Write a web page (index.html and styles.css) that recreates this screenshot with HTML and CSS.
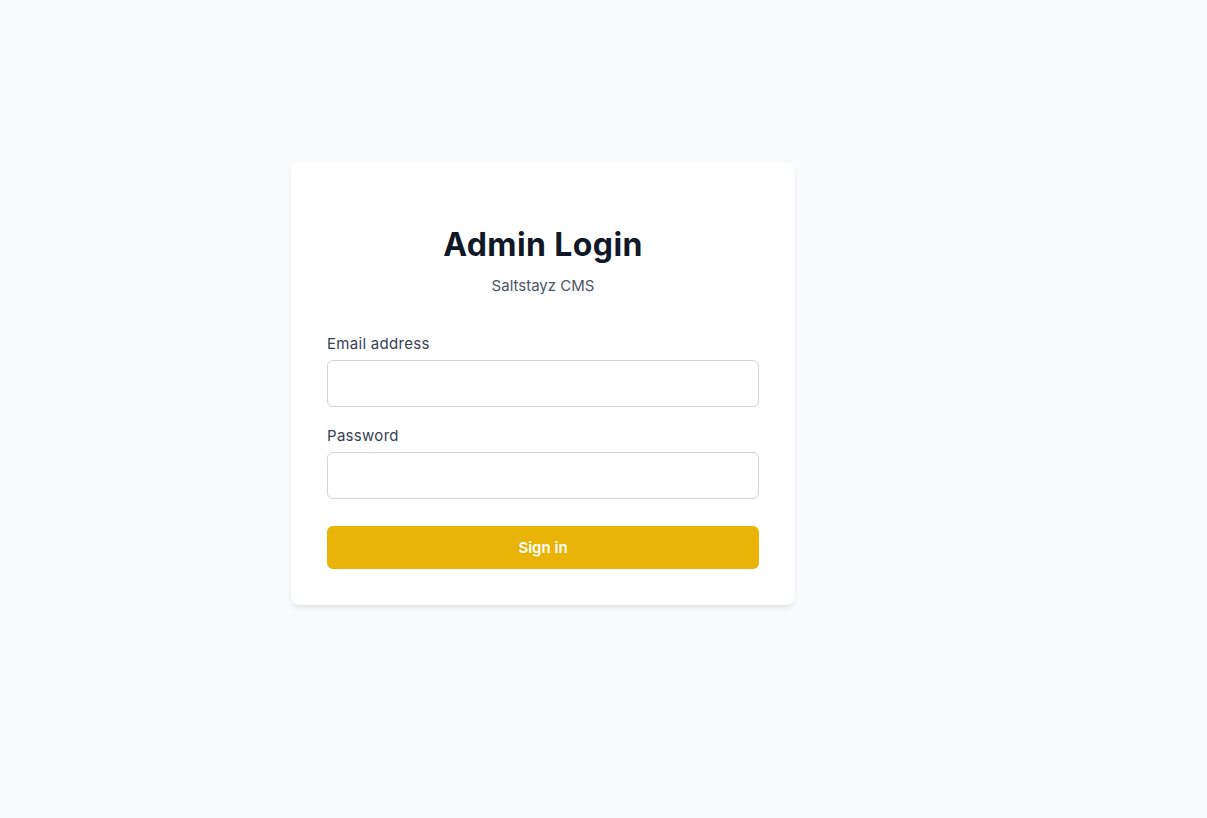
FILE: index.html
```html
<!DOCTYPE html>
<html lang="en">
<head>
    <meta charset="UTF-8">
    <meta name="viewport" content="width=device-width, initial-scale=1.0">
    <title>Admin Login</title>
    <link rel="stylesheet" href="styles.css">
</head>
<body>
    <div class="page">
        <div class="login-card">
            <div class="login-header">
                <h1>Admin Login</h1>
                <p>Saltstayz CMS</p>
            </div>
            <form class="login-form" onsubmit="return false;">
                <div class="input-group">
                    <label for="email">Email address</label>
                    <input type="email" id="email" />
                </div>
                <div class="input-group">
                    <label for="password">Password</label>
                    <input type="password" id="password" />
                </div>
                <button type="submit">Sign in</button>
            </form>
        </div>
    </div>
</body>
</html>
```

FILE: styles.css
```css
* {
    box-sizing: border-box;
}
body {
    margin: 0;
    font-family: Inter, "Noto Sans", sans-serif;
    background-color: #f9fafb;
    color: #111827;
}
.page {
    min-height: 100vh;
    padding-top: 162px;
    padding-left: 291px;
}
.login-card {
    width: 504px;
    padding: 65px 36px 36px;
    background-color: #fff;
    border-radius: 8px;
    box-shadow: 0 4px 6px -1px rgba(0, 0, 0, 0.08), 0 2px 4px -2px rgba(0, 0, 0, 0.06);
}
.login-header {
    text-align: center;
}
.login-header h1 {
    margin: 0;
    font-size: 32px;
    line-height: 36px;
    font-weight: 700;
    letter-spacing: 0.4px;
    color: #111827;
}
.login-header p {
    margin: 13px 0 0;
    font-size: 15px;
    line-height: 20px;
    color: #4b5563;
}
.login-form {
    margin-top: 37px;
}
.input-group {
    margin-bottom: 18px;
}
.input-group label {
    display: block;
    padding-top: 1px;
    margin-bottom: 6px;
    font-size: 15px;
    line-height: 20px;
    letter-spacing: 0.3px;
    color: #374151;
}
.input-group input {
    display: block;
    width: 100%;
    height: 47px;
    padding: 8px 12px;
    border: 1px solid #d1d5db;
    border-radius: 6px;
    font-family: inherit;
    font-size: 15px;
}
button {
    display: block;
    width: 100%;
    height: 43px;
    margin-top: 27px;
    background-color: #eab308;
    color: #fff;
    border: none;
    border-radius: 6px;
    font-family: inherit;
    font-size: 15px;
    font-weight: 600;
    cursor: pointer;
}
```
